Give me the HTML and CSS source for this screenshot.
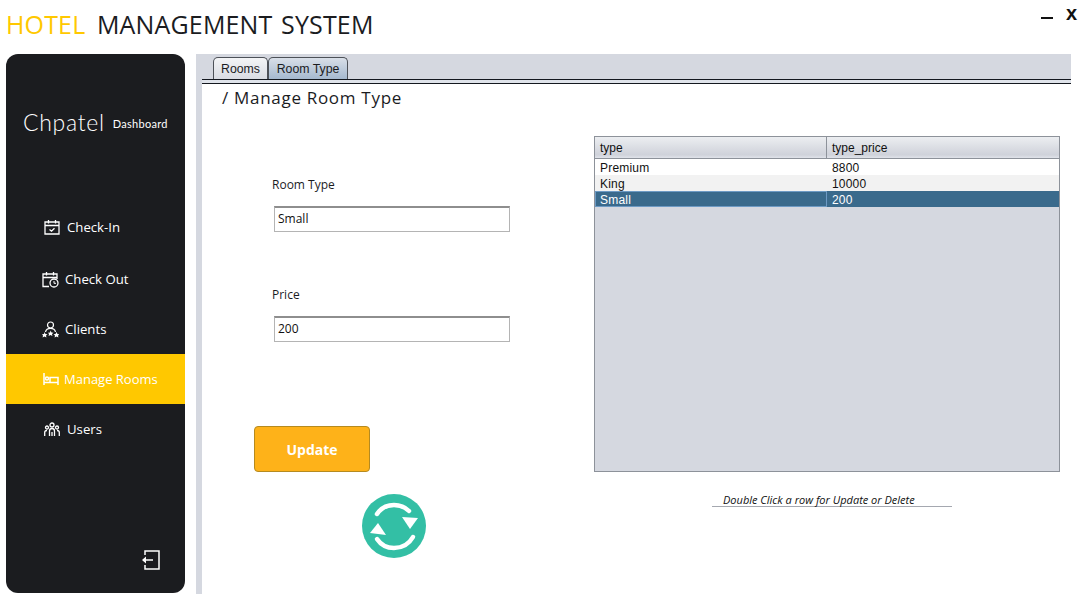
FILE: index.html
```html
<!DOCTYPE html>
<html lang="en">
<head>
  <meta charset="UTF-8">
  <title>Hotel Management System</title>
  <link rel="stylesheet" href="styles.css">
</head>
<body>

<div class="app">
  <header class="titlebar">
    <h1 class="app-title"><span class="accent">HOTEL</span> MANAGEMENT SYSTEM</h1>
    <div class="window-btns">
      <span class="win-min"></span>
      <span class="win-close">x</span>
    </div>
  </header>

  <div class="main">
    <aside class="sidebar">
      <div class="brand">
        <span class="brand-name">Chpatel</span>
        <span class="brand-sub">Dashboard</span>
      </div>

      <nav class="nav">
        <a class="nav-item checkin">
          <svg class="nav-icon" viewBox="0 0 16 16" width="16" height="16" fill="none" stroke="currentColor" stroke-width="1.300">
            <path d="M1 3h14v12H1zM1 6.500h14M4.500 1v3.500M11.500 1v3.500M5.500 10.500l2 1.700 3-3"/>
          </svg>
          <span>Check-In</span>
        </a>
        <a class="nav-item checkout">
          <svg class="nav-icon" viewBox="0 0 17 17" width="17" height="17" fill="none" stroke="currentColor" stroke-width="1.300">
            <path d="M7 15.500H1V3h14v5M1 6.500h14M4.500 1v3.500M11.500 1v3.500"/>
            <circle cx="12" cy="12" r="4"/>
            <path d="M12 10v2.300h2" stroke-width="1"/>
          </svg>
          <span>Check Out</span>
        </a>
        <a class="nav-item clients">
          <svg class="nav-icon" viewBox="0 0 17 17" width="17" height="17" fill="none" stroke="currentColor" stroke-width="1.200">
            <circle cx="8.500" cy="4" r="3"/>
            <path d="M3.500 11c.5-2.500 2.500-3.600 5-3.600s4.500 1.100 5 3.600"/>
            <path fill="currentColor" stroke="none" d="M2.500 11l1 1.900 2 .3-1.500 1.400.4 2-1.900-1-1.900 1 .4-2L0 13.200l2-.3zM8.500 9.500l1 1.900 2 .3-1.500 1.400.4 2-1.900-1-1.900 1 .4-2L6 11.700l2-.3zM14.500 11l1 1.900 2 .3-1.500 1.400.4 2-1.900-1-1.900 1 .4-2-1.500-1.400 2-.3z"/>
          </svg>
          <span>Clients</span>
        </a>
        <a class="nav-item rooms active">
          <svg class="nav-icon" viewBox="0 0 16 14" width="16" height="14" fill="none" stroke="currentColor" stroke-width="1.500">
            <path d="M1 1v12M1 10.500h14M15 13V5.500H7v5"/>
            <circle cx="4" cy="6.500" r="1.500"/>
          </svg>
          <span>Manage Rooms</span>
        </a>
        <a class="nav-item users">
          <svg class="nav-icon" viewBox="0 0 16 15" width="16" height="15" fill="none" stroke="currentColor" stroke-width="1.300">
            <circle cx="8" cy="3" r="2"/>
            <circle cx="3" cy="5.500" r="1.500"/>
            <circle cx="13" cy="5.500" r="1.500"/>
            <path d="M5.500 14V9c0-1.500 1-2.500 2.500-2.500s2.500 1 2.500 2.500v5M.7 14v-3.500C.7 9 1.700 8.500 3 8.500M15.300 14v-3.500c0-1.500-1-2-2.300-2M8 10v4"/>
          </svg>
          <span>Users</span>
        </a>
      </nav>

      <div class="logout">
        <svg viewBox="0 0 18 20" width="18" height="20" fill="none" stroke="#fff" stroke-width="1.500">
          <path d="M3 5V1h14v18H3v-4"/>
          <path d="M11 10H3"/>
          <path fill="#fff" stroke="none" d="M0 10l4-3.500v7z"/>
        </svg>
      </div>
    </aside>

    <section class="panel">
      <div class="tabs">
        <div class="tab">Rooms</div>
        <div class="tab selected">Room Type</div>
      </div>
      <div class="tab-line"></div>

      <div class="content">
        <h2 class="crumb">/ Manage Room Type</h2>

        <div class="columns">
          <div class="form">
            <label class="field-label">Room Type</label>
            <input class="field" type="text" value="Small">
            <label class="field-label price-label">Price</label>
            <input class="field" type="text" value="200">
            <button class="update-btn">Update</button>
            <div class="refresh">
              <svg viewBox="0 0 64 64" width="64" height="64">
                <circle cx="32" cy="32" r="32" fill="#33bfa5"/>
                <path d="M15 20C19 14 25 11 32 11c6 0 11 2 15 6" fill="none" stroke="#fff" stroke-width="4.500" stroke-linecap="round"/>
                <path d="M40 23l16 1-8 11z" fill="#fff"/>
                <path d="M51 43c-4 7-11 11-19 11-7 0-13-3-17-9" fill="none" stroke="#fff" stroke-width="4.500" stroke-linecap="round"/>
                <path d="M8 39l16 2-8-12z" fill="#fff"/>
              </svg>
            </div>
          </div>

          <div class="table-col">
            <div class="grid">
              <div class="grid-head">
                <div class="cell col-type">type</div>
                <div class="cell col-price">type_price</div>
              </div>
              <div class="grid-row">
                <div class="cell col-type">Premium</div>
                <div class="cell col-price">8800</div>
              </div>
              <div class="grid-row alt">
                <div class="cell col-type">King</div>
                <div class="cell col-price">10000</div>
              </div>
              <div class="grid-row sel">
                <div class="cell col-type">Small</div>
                <div class="cell col-price">200</div>
              </div>
            </div>
            <div class="hint"><span>Double Click a row for Update or Delete</span></div>
          </div>
        </div>
      </div>
    </section>
  </div>
</div>

</body>
</html>
```

FILE: styles.css
```css
* {
  box-sizing: border-box;
}

html, body {
  margin: 0;
  height: 100%;
}

body {
  background: #fff;
  font-family: "Open Sans", "Noto Sans", sans-serif;
  overflow: hidden;
}

.app {
  width: 1078px;
  height: 601px;
}

/* title bar */
.titlebar {
  height: 54px;
  display: flex;
  justify-content: space-between;
  padding-left: 6px;
}

.app-title {
  margin: 8px 0 0;
  font-size: 25px;
  line-height: 32px;
  font-weight: 400;
  color: #1b1c1f;
  letter-spacing: .15px;
  word-spacing: 2px;
}

.accent {
  color: #ffc800;
  margin-right: 3px;
}

.window-btns {
  display: flex;
  align-items: flex-start;
  gap: 13px;
}

.win-min {
  width: 12px;
  height: 2px;
  margin-top: 17px;
  background: #111;
}

.win-close {
  font-family: "Liberation Sans", sans-serif;
  font-size: 20px;
  line-height: 18px;
  font-weight: 700;
  color: #111;
  margin-top: 4px;
  width: 12px;
}

/* layout */
.main {
  display: flex;
  height: 540px;
  padding-left: 6px;
}

.sidebar {
  width: 179px;
  height: 539px;
  margin-right: 11px;
  background: #1b1c1f;
  border-radius: 12px;
  color: #fff;
  display: flex;
  flex-direction: column;
}

.brand {
  display: flex;
  align-items: center;
  padding: 0 0 2px 17px;
  height: 138px;
  margin-bottom: 10px;
}

.brand-name {
  font-family: "Lato", sans-serif;
  font-weight: 300;
  font-size: 23px;
  line-height: 28px;
  letter-spacing: .7px;
}

.brand-sub {
  font-family: "Lato", sans-serif;
  font-size: 11px;
  margin-left: 8px;
  margin-top: 3px;
  letter-spacing: .3px;
}

.nav {
  display: flex;
  flex-direction: column;
}

.nav-item {
  height: 50px;
  display: flex;
  align-items: center;
  gap: 7px;
  padding-left: 36px;
  font-size: 13.200px;
  color: #fff;
}

.nav-icon {
  flex: none;
}

.checkin {
  padding-left: 38px;
  gap: 7px;
}

.checkout {
  height: 52px;
  padding-top: 2px;
  gap: 6px;
}

.clients {
  gap: 6px;
}

.rooms {
  gap: 5px;
  padding-left: 37px;
  font-size: 13px;
}

.rooms.active {
  background: #ffc800;
}

.users {
  padding-left: 38px;
  gap: 7px;
}

.logout {
  margin-top: auto;
  padding: 0 0 23px 136px;
  line-height: 0;
}

/* right panel */
.panel {
  width: 875px;
  height: 540px;
  background: #d5d8e0;
  padding-left: 6px;
  display: flex;
  flex-direction: column;
}

.tabs {
  display: flex;
  height: 25px;
  padding: 3px 0 0 11px;
  background: #d5d8e0;
  font-family: "Liberation Sans", sans-serif;
  font-size: 12.300px;
  color: #1b1c1f;
}

.tab {
  width: 55px;
  border: 1px solid #4d5158;
  border-bottom: 0;
  border-radius: 5px 5px 0 0;
  background: linear-gradient(#f3f4f6, #d9dce3);
  text-align: center;
  line-height: 23px;
}

.tab.selected {
  width: 80px;
  background: linear-gradient(#d9dfe8, #a5b9cf);
}

.tab-line {
  height: 5px;
  border-top: 1px solid #14181f;
  border-bottom: 1px solid #14181f;
  background: #dfe3ea;
}

.content {
  flex: 1;
  background: #fff;
}

.crumb {
  margin: 0;
  padding: 2px 0 0 20px;
  height: 52px;
  font-size: 17px;
  line-height: 24px;
  font-weight: 400;
  letter-spacing: .7px;
  color: #1b1c1f;
}

.columns {
  display: flex;
}

.form {
  width: 392px;
  padding: 40px 0 0 70px;
}

.field-label {
  display: block;
  font-size: 12px;
  line-height: 17px;
  color: #1b1c1f;
}

.price-label {
  margin-top: 54px;
}

.field {
  display: block;
  width: 236px;
  height: 26px;
  margin: 13px 0 0 2px;
  padding: 0 3px 2px;
  border: 1px solid #b4b4b4;
  border-top: 2px solid #8e8e8e;
  border-radius: 0;
  font-family: "Open Sans", sans-serif;
  font-size: 12px;
  color: #111;
  outline: none;
}

.update-btn {
  display: block;
  width: 116px;
  height: 46px;
  margin: 84px 0 0 -18px;
  padding: 0;
  border: 1px solid #b58a20;
  border-radius: 4px;
  background: #feb219;
  color: #fff;
  font-family: "Open Sans", sans-serif;
  font-size: 14px;
  font-weight: 700;
}

.refresh {
  margin: 22px 0 0 90px;
  line-height: 0;
}

.table-col {
  width: 466px;
}

.grid {
  height: 336px;
  border: 1px solid #8d929a;
  background: #d5d8e0;
  font-family: "Liberation Sans", sans-serif;
  font-size: 12px;
  color: #111;
}

.grid-head {
  display: flex;
  height: 22px;
  line-height: 23px;
  border-bottom: 1px solid #8d929a;
  background: linear-gradient(#eceef1, #cfd2da 85%, #e0e3ea);
}

.grid-row {
  display: flex;
  height: 16px;
  line-height: 18px;
  letter-spacing: .2px;
  background: #fff;
}

.grid-row.alt {
  background: #f2f2f2;
}

.grid-row.sel {
  background: #3a6a8c;
  color: #fff;
}

.cell {
  padding-left: 5px;
}

.col-type {
  width: 232px;
}

.col-price {
  flex: 1;
}

.grid-head .col-type {
  border-right: 1px solid #8d929a;
}

.grid-row.sel .col-type {
  border: 1px solid #6d9ac4;
  padding-left: 4px;
  line-height: 16px;
}

.hint {
  width: 240px;
  margin: 22px 0 0 118px;
  height: 13px;
  border-bottom: 1px solid #a5a8b0;
  padding-left: 11px;
  font-family: "Open Sans", sans-serif;
  font-size: 11px;
  font-style: italic;
  line-height: 12px;
  color: #111;
  white-space: nowrap;
}
```
